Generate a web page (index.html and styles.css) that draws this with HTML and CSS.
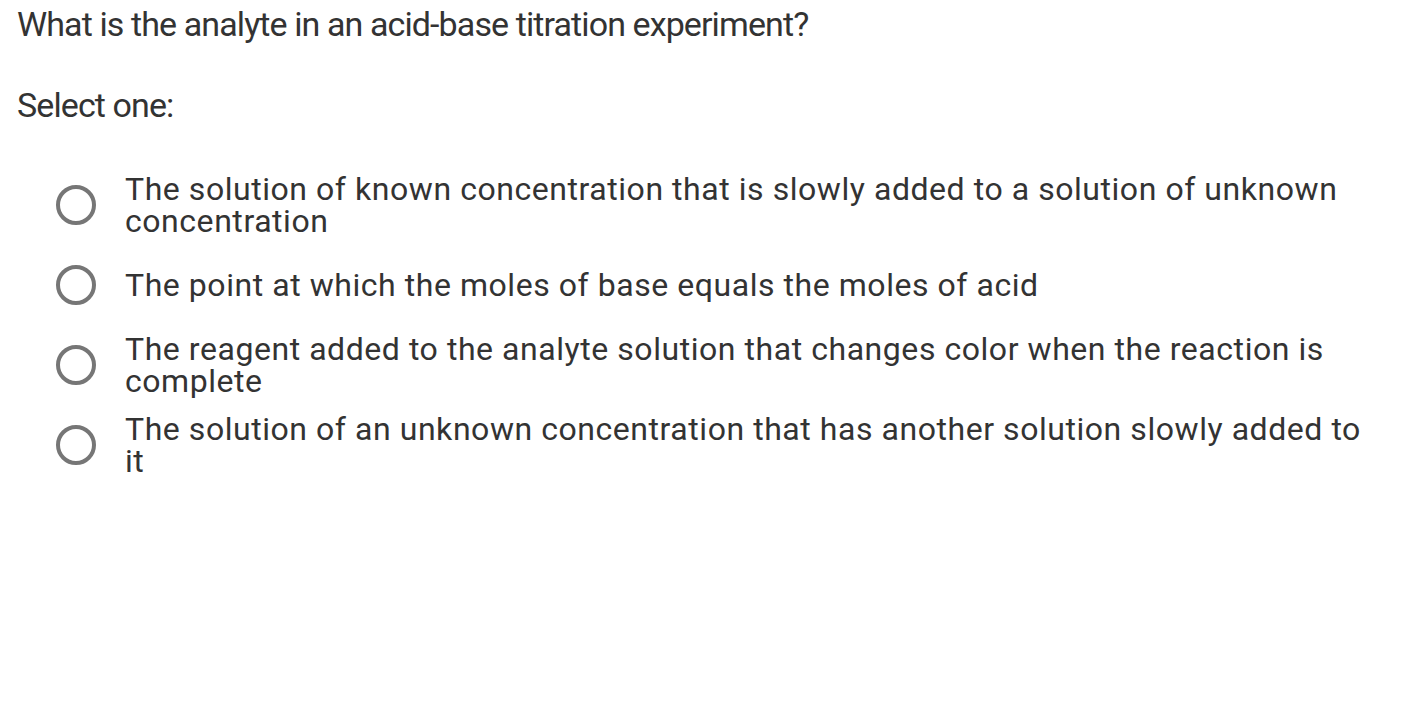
FILE: index.html
```html
<!DOCTYPE html>
<html>
<head>
<meta charset="utf-8">
<link rel="stylesheet" href="styles.css">
</head>
<body>
<div class="question">
  <p class="qtext">What is the analyte in an acid-base titration experiment?</p>
  <p class="prompt">Select one:</p>
  <div class="answers">
    <label class="option">
      <span class="radio"></span>
      <span class="label">The solution of known concentration that is slowly added to a solution of unknown concentration</span>
    </label>
    <label class="option">
      <span class="radio"></span>
      <span class="label">The point at which the moles of base equals the moles of acid</span>
    </label>
    <label class="option">
      <span class="radio"></span>
      <span class="label">The reagent added to the analyte solution that changes color when the reaction is complete</span>
    </label>
    <label class="option">
      <span class="radio"></span>
      <span class="label">The solution of an unknown concentration that has another solution slowly added to it</span>
    </label>
  </div>
</div>
</body>
</html>
```
FILE: styles.css
```css
html, body {
  margin: 0;
  padding: 0;
  background: #ffffff;
}
.question {
  padding: 4px 0 0 17px;
  font-family: Roboto, "Liberation Sans", sans-serif;
  color: #333333;
}
.qtext {
  margin: 0;
  font-size: 34px;
  line-height: 40px;
  letter-spacing: -0.9px;
}
.prompt {
  margin: 41px 0 0 0;
  font-size: 34px;
  line-height: 40px;
  letter-spacing: -0.9px;
}
.answers {
  margin-top: 48px;
  padding-left: 39px;
  display: flex;
  flex-direction: column;
  gap: 16px;
  width: 1319px;
}
.option {
  display: flex;
  align-items: center;
  min-height: 64px;
}
.radio {
  flex: none;
  width: 32px;
  height: 32px;
  border: 4px solid #767676;
  border-radius: 50%;
  margin-right: 29px;
}
.label {
  font-size: 32px;
  line-height: 32px;
  letter-spacing: 0.55px;
  color: #333333;
}
```
